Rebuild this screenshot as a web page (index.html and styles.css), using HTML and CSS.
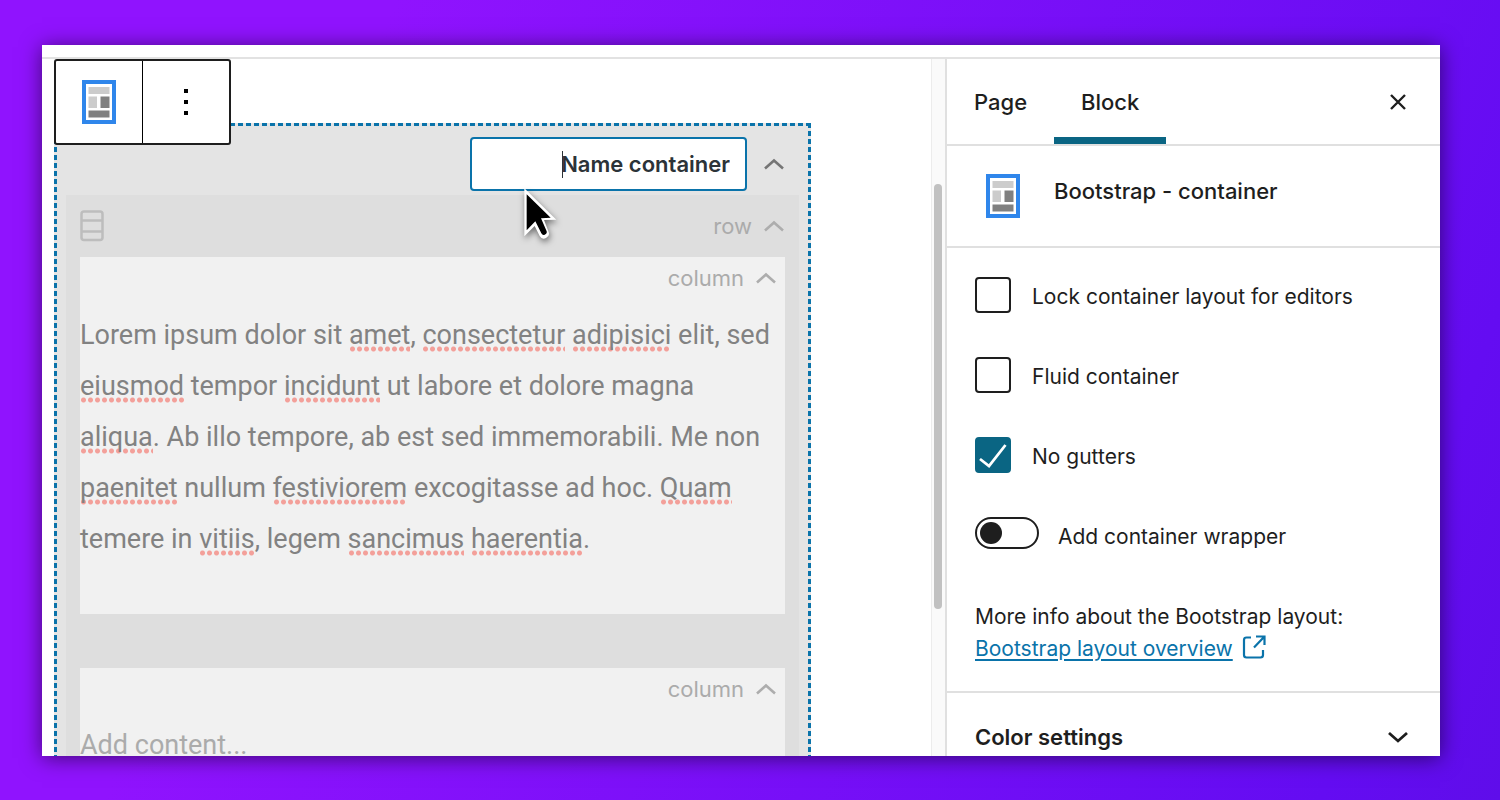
FILE: index.html
```html
<!DOCTYPE html>
<html lang="en">
<head>
<meta charset="utf-8">
<title>Bootstrap container block</title>
<link rel="stylesheet" href="styles.css">
</head>
<body>
<svg class="sprite" aria-hidden="true">
  <symbol id="icon-container" viewBox="0 0 34 44">
    <rect x="2" y="2" width="30" height="40" fill="#fff" stroke="#2f86eb" stroke-width="4"/>
    <path fill="#ccc" d="M6.500 7h21v7h-21zM6.500 16.500h8.500V28H6.500z"/>
    <path fill="#808080" d="M18.500 16.500h9V28h-9zM6.500 30.500h21v7h-21z"/>
  </symbol>
  <symbol id="icon-up" viewBox="0 0 22 12">
    <path d="M2 10.500 11 2.500l9 8" fill="none" stroke="currentColor" stroke-width="2.600"/>
  </symbol>
</svg>
<main class="window">
  <div class="topbar"></div>
  <div class="editor">
    <section class="canvas">
      <div class="container-block">
        <header class="container-head">
          <div class="name-field">
            <input class="name-input" type="text" aria-label="Container name" placeholder="Name container">
            <span class="caret"></span>
            <svg class="pointer" viewBox="0 0 108 168" aria-hidden="true">
              <path d="M4 4v144l31-31 15 30q7 12 19 6 12-6 8-18l-14-36 37-1z" fill="#fff"/>
              <path d="M11 22v108l26-27 18 36q4 7 10 4 8-3 6-10l-17-39 29-2z" fill="#000"/>
            </svg>
          </div>
          <button class="collapse dark" type="button" aria-label="Collapse container"><svg><use href="#icon-up"/></svg></button>
        </header>
        <div class="row-block">
          <header class="row-head">
            <svg class="row-icon" viewBox="0 0 24 32" aria-hidden="true">
              <rect x="1.500" y="1.500" width="21" height="28.500" rx="2.500"/>
              <path d="M1 10.500h22M1 21.500h22"/>
            </svg>
            <span class="label">row</span>
            <button class="collapse" type="button" aria-label="Collapse row"><svg><use href="#icon-up"/></svg></button>
          </header>
          <article class="column">
            <header class="column-head">
              <span class="label">column</span>
              <button class="collapse" type="button" aria-label="Collapse column"><svg><use href="#icon-up"/></svg></button>
            </header>
            <p class="content">Lorem ipsum dolor sit <span class="typo">amet</span>, <span class="typo">consectetur</span> <span class="typo">adipisici</span> elit, sed <span class="typo">eiusmod</span> tempor <span class="typo">incidunt</span> ut labore et dolore magna <span class="typo">aliqua</span>. Ab illo tempore, ab est sed immemorabili. Me non <span class="typo">paenitet</span> nullum <span class="typo">festiviorem</span> excogitasse ad hoc. <span class="typo">Quam</span> temere in <span class="typo">vitiis</span>, legem <span class="typo">sancimus</span> <span class="typo">haerentia</span>.</p>
          </article>
          <article class="column">
            <header class="column-head">
              <span class="label">column</span>
              <button class="collapse" type="button" aria-label="Collapse column"><svg><use href="#icon-up"/></svg></button>
            </header>
            <input class="content-input" type="text" aria-label="Column content" placeholder="Add content...">
          </article>
        </div>
      </div>
      <div class="toolbar">
        <button type="button" aria-label="Container"><svg class="block-icon"><use href="#icon-container"/></svg></button>
        <button type="button" aria-label="Options"><svg class="dots" viewBox="0 0 4 28"><path d="M0 1h4v4H0zM0 12h4v4H0zM0 23h4v4H0z"/></svg></button>
      </div>
    </section>
    <div class="scroll-track"><div class="scroll-thumb"></div></div>
    <aside class="sidebar">
      <div class="tabs">
        <button class="tab" type="button">Page</button>
        <button class="tab active" type="button">Block</button>
        <button class="close" type="button" aria-label="Close settings"><svg viewBox="0 0 18 18"><path d="M2 2l14 14M16 2 2 16"/></svg></button>
      </div>
      <div class="card">
        <svg class="block-icon" aria-hidden="true"><use href="#icon-container"/></svg>
        <h2>Bootstrap - container</h2>
      </div>
      <div class="settings">
        <label class="option"><input class="check" type="checkbox">Lock container layout for editors</label>
        <label class="option"><input class="check" type="checkbox">Fluid container</label>
        <label class="option"><input class="check" type="checkbox" checked>No gutters
          <svg class="tick" viewBox="0 0 36 36" aria-hidden="true"><path d="M5 22 14 29 30.500 8"/></svg></label>
        <label class="option wrapper-option"><input class="toggle" type="checkbox" role="switch">Add container wrapper</label>
        <p class="info">More info about the Bootstrap layout:<br>
          <a href="#overview">Bootstrap layout overview</a><svg class="external" viewBox="0 0 24 24" aria-hidden="true"><path d="M9 2.500H4.500Q2 2.500 2 5v15q0 2.500 2.500 2.500h14q2.500 0 2.500-2.500v-5M12 12.500 22 2M14 1.500h8.500V10"/></svg></p>
      </div>
      <button class="panel" type="button">Color settings<svg viewBox="0 0 22 12"><path d="M2 2l9 8 9-8"/></svg></button>
    </aside>
  </div>
</main>
</body>
</html>
```
FILE: styles.css
```css
* { box-sizing: border-box; }
body {
  margin: 0;
  height: 100vh;
  padding: 45px 60px 44px 42px;
  background: linear-gradient(110deg, #9013fe, #9013fe 22%, #640cf2 90%, #5f0dea);
  font: 22px/32px Inter, "Liberation Sans", sans-serif;
  color: #1e1e1e;
}
button, input { font: inherit; color: inherit; }
button { border: 0; padding: 0; background: none; }
svg { display: block; }
.sprite { position: absolute; width: 0; height: 0; }
.window {
  height: 100%;
  display: flex;
  flex-direction: column;
  overflow: hidden;
  background: #fff;
  box-shadow: 0 2px 20px rgba(0, 0, 0, .55);
}
.topbar { flex: none; height: 14px; border-bottom: 2px solid #e2e2e2; }
.editor { flex: 1; min-height: 0; display: flex; }

.canvas { position: relative; flex: 1; min-width: 0; overflow: hidden; padding: 64px 120px 0 12px; }
.toolbar {
  position: absolute;
  top: 0;
  left: 12px;
  width: 177px;
  height: 86px;
  display: flex;
  border: 2px solid #1e1e1e;
  border-radius: 3px;
  background: #fff;
}
.toolbar button { flex: 1; display: grid; place-items: center; }
.toolbar button + button { border-left: 1px solid #000; }
.block-icon { width: 34px; height: 44px; }
.dots { width: 4px; height: 28px; }

.container-block {
  padding: 3px;
  background:
    repeating-linear-gradient(90deg, #0a73aa 0 5px, #e4e4e4 5px 8px) top / 100% 3px no-repeat,
    repeating-linear-gradient(#0a73aa 0 5px, #e4e4e4 5px 8px) left / 3px 100% no-repeat,
    repeating-linear-gradient(#0a73aa 0 5px, #e4e4e4 5px 8px) right / 3px 100% no-repeat,
    #e4e4e4;
}
.container-head { height: 69px; padding: 11px 23px 0 0; display: flex; justify-content: flex-end; gap: 16px; }
.name-field { position: relative; height: 54px; }
.name-input {
  width: 277px;
  height: 54px;
  padding: 0 15px;
  border: 2px solid #0a73aa;
  border-radius: 4px;
  background: #fff;
  font-weight: 600;
  text-align: right;
}
.name-input::placeholder { color: #2c3338; }
.caret { position: absolute; top: 14px; right: 184px; width: 1px; height: 27px; background: #2c3338; }
.pointer {
  position: absolute;
  left: 53px;
  top: 50px;
  width: 36px;
  height: 56px;
  filter: drop-shadow(1px 3px 3px rgba(0, 0, 0, .5));
}
.collapse { display: grid; place-items: center; color: #adadad; }
.collapse svg { width: 22px; height: 12px; }
.collapse.dark { color: #757575; height: 54px; }

.row-block { margin: 0 9px; padding: 0 14px 50px; background: #dedede; }
.row-head { height: 62px; display: flex; align-items: center; gap: 11px; }
.row-icon { width: 24px; height: 32px; fill: none; stroke: #bdbdbd; stroke-width: 2.500; }
.label { margin-left: auto; color: #ababab; }
.column { margin-bottom: 54px; padding-bottom: 49px; background: #f1f1f1; }
.column-head { height: 42px; padding-right: 8px; display: flex; align-items: center; gap: 11px; }
.content, .content-input { font-family: Roboto, "Liberation Sans", sans-serif; font-size: 27px; line-height: 51px; }
.content { margin: 11px 0 0; padding-right: 8px; color: #828282; }
.typo {
  padding-bottom: 1px;
  background: radial-gradient(circle at center, #f3a09a 2px, transparent 3px) left bottom / 7px 6px repeat-x;
}
.content-input { display: block; width: 100%; height: 51px; margin-top: 10px; padding: 0; border: 0; background: none; }
.content-input::placeholder { color: #ababab; }

.scroll-track { width: 14px; padding: 125px 2px 0; border-left: 1px solid #ececec; background: #fafafa; }
.scroll-thumb { width: 8px; height: 425px; border-radius: 4px; background: #c1c1c1; }

.sidebar { width: 495px; border-left: 2px solid #e0e0e0; overflow: hidden; }
.tabs { height: 87px; display: flex; border-bottom: 2px solid #e0e0e0; padding-right: 33px; }
.tab { padding: 7px 27px 0; font-weight: 500; border-bottom: 7px solid transparent; }
.tab.active { border-color: #0a6583; }
.close { margin-left: auto; }
.close svg { width: 18px; height: 18px; fill: none; stroke: #1e1e1e; stroke-width: 2.400; }
.card { height: 102px; padding: 28px 39px 0; display: flex; gap: 34px; border-bottom: 2px solid #e0e0e0; }
.card h2 { margin: 1px 0 0; font-size: 22px; font-weight: 500; }
.settings { padding: 29px 28px 26px; border-bottom: 2px solid #e0e0e0; display: flex; flex-direction: column; gap: 40px; font-size: 21px; }
.option { position: relative; display: flex; align-items: flex-start; gap: 21px; line-height: 40px; }
.check { appearance: none; flex: none; width: 36px; height: 36px; margin: 0; border: 2px solid #1e1e1e; border-radius: 4px; background: #fff; }
.check:checked { border-color: #0a6583; background: #0a6583; }
.tick { position: absolute; left: 0; top: 0; width: 36px; height: 36px; fill: none; stroke: #fff; stroke-width: 2.800; }
.wrapper-option { gap: 19px; }
.toggle { appearance: none; flex: none; width: 64px; height: 32px; margin: 0; padding: 3px; border: 2px solid #1e1e1e; border-radius: 16px; background: #fff; }
.toggle::before { content: ""; display: block; width: 22px; height: 22px; border-radius: 50%; background: #1e1e1e; }
.info { margin: 4px 0 0; }
.info a { color: #0a73aa; text-decoration-thickness: 2px; text-underline-offset: 3px; }
.external { display: inline-block; width: 24px; height: 24px; margin-left: 9px; vertical-align: -3px; fill: none; stroke: #0a73aa; stroke-width: 2.200; }
.panel { width: 100%; padding: 28px 31px 28px 28px; display: flex; align-items: center; justify-content: space-between; font-weight: 600; }
.panel svg { width: 22px; height: 12px; fill: none; stroke: #1e1e1e; stroke-width: 2.800; }
```
